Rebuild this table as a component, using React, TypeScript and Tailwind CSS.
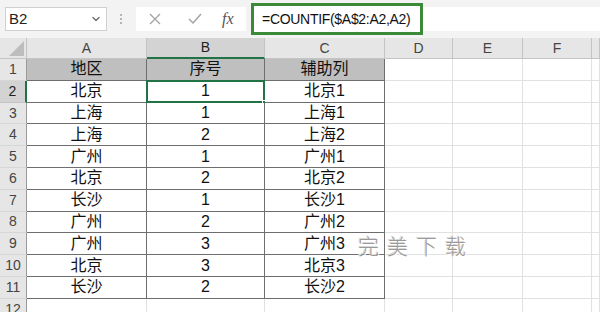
import { ChevronDown } from "lucide-react";

type Row = [string, string, string];

const rows: Row[] = [
  ["北京", "1", "北京1"],
  ["上海", "1", "上海1"],
  ["上海", "2", "上海2"],
  ["广州", "1", "广州1"],
  ["北京", "2", "北京2"],
  ["长沙", "1", "长沙1"],
  ["广州", "2", "广州2"],
  ["广州", "3", "广州3"],
  ["北京", "3", "北京3"],
  ["长沙", "2", "长沙2"],
];

const cellFont = "font-['Liberation_Sans','Noto_Sans_CJK_SC',sans-serif]";

// widths of the sheet columns after the row header; the last one is cut by the window
const colWidths = ["w-[120px]", "w-[118px]", "w-[120px]", "w-[68px]", "w-[70px]", "w-[69px]", "w-[8px]"];
const colNames = ["A", "B", "C", "D", "E", "F", ""];

function Toolbar() {
  return (
    <div className="flex h-[38px] items-center bg-[#f3f3f3]">
      <div className="ml-[5px] flex h-[24px] w-[102px] items-center justify-between border border-[#d0d0d0] bg-white pl-[3px] pr-[4px]">
        <span className="text-[15px] text-[#222]">B2</span>
        <ChevronDown size={12} strokeWidth={3} className="text-[#777]" />
      </div>
      <div className="ml-[13px] flex flex-col gap-[2px]">
        <span className="h-[2px] w-[2px] bg-[#b5b5b5]" />
        <span className="h-[2px] w-[2px] bg-[#b5b5b5]" />
        <span className="h-[2px] w-[2px] bg-[#b5b5b5]" />
      </div>
      <div className="ml-[14px] flex h-[24px] w-[110px] items-center bg-white">
        <svg width="12" height="12" viewBox="0 0 12 12" className="ml-[13px]">
          <path d="M1 1 L11 11 M11 1 L1 11" stroke="#a3a3a3" strokeWidth="1.3" fill="none" />
        </svg>
        <svg width="14" height="12" viewBox="0 0 14 12" className="ml-[27px]">
          <path d="M1 6 L5 10 L13 1" stroke="#a3a3a3" strokeWidth="1.5" fill="none" />
        </svg>
        <span className="ml-[20px] font-['Liberation_Serif',serif] text-[16px] italic text-[#555]">fx</span>
      </div>
      <div className="ml-[5px] flex h-[24px] flex-1 items-center bg-white">
        <div className="flex h-[32px] w-[172px] items-center border-[3px] border-[#3a8a3a] bg-white pl-[8px]">
          <span className="font-['Liberation_Sans',sans-serif] text-[14px] tracking-[-0.3px] text-[#111]">
            =COUNTIF($A$2:A2,A2)
          </span>
        </div>
      </div>
    </div>
  );
}

function HeaderRow() {
  return (
    <div className="flex h-[21px] bg-[#e6e6e6]">
      <div className="flex w-[27px] shrink-0 items-end justify-end border-r border-b border-[#c4c4c4] p-[2px]">
        <svg width="15" height="15" viewBox="0 0 15 15">
          <path d="M15 0 L15 15 L0 15 Z" fill="#bdbdbd" />
        </svg>
      </div>
      {colNames.map((name, i) => (
        <div
          key={i}
          className={`${colWidths[i]} flex shrink-0 items-center justify-center border-r text-[14px] ${
            name === "B"
              ? "border-b-2 border-r-[#c4c4c4] border-b-[#217346] bg-[#d3d3d3] text-[#222]"
              : "border-b border-[#c4c4c4] text-[#444]"
          }`}
        >
          {name}
        </div>
      ))}
    </div>
  );
}

function SheetRow({ index, cells }: { index: number; cells: string[] }) {
  const selectedRow = index === 2;
  return (
    <div className="flex h-[21.8px]">
      <div
        className={`flex w-[27px] shrink-0 items-center justify-center text-[14px] ${
          selectedRow
            ? "border-r-2 border-b border-r-[#217346] border-b-[#c4c4c4] bg-[#d3d3d3] text-[#222]"
            : "border-r border-b border-[#9a9a9a] border-b-[#d6d6d6] bg-[#e6e6e6] text-[#444]"
        }`}
      >
        {index}
      </div>
      {colNames.map((name, i) => {
        const inTable = i < 3 && index <= 11;
        const selected = selectedRow && name === "B";
        return (
          <div
            key={i}
            className={`${colWidths[i]} relative flex shrink-0 items-center justify-center border-r border-b text-[16px] text-[#111] ${cellFont} ${
              inTable ? "border-[#6e6e6e]" : "border-[#e1e1e1]"
            } ${index === 1 && inTable ? "bg-[#bfbfbf]" : "bg-white"}`}
          >
            {cells[i] ?? ""}
            {selected && (
              <>
                <div className="pointer-events-none absolute -top-[1px] -left-[1px] -right-[1px] -bottom-[1px] border-2 border-[#217346]" />
                <div className="absolute -right-[3px] -bottom-[3px] h-[5px] w-[5px] border border-white bg-[#217346]" />
              </>
            )}
          </div>
        );
      })}
    </div>
  );
}

export default function App() {
  return (
    <main className="h-[312px] w-[600px] overflow-hidden bg-white font-['Liberation_Sans','Noto_Sans_CJK_SC',sans-serif]">
      <Toolbar />
      <div className="relative">
        <HeaderRow />
        <SheetRow index={1} cells={["地区", "序号", "辅助列"]} />
        {rows.map((row, i) => (
          <SheetRow key={i} index={i + 2} cells={row} />
        ))}
        <SheetRow index={12} cells={[]} />
        <div className="pointer-events-none absolute left-[358px] top-[192px] font-['Noto_Sans_CJK_SC',sans-serif] text-[21px] font-light tracking-[8px] text-[#9a9a9a] [text-shadow:1px_1px_0_#ffffff,-1px_-1px_0_#d8d8d8]">
          完美下载
        </div>
      </div>
    </main>
  );
}
